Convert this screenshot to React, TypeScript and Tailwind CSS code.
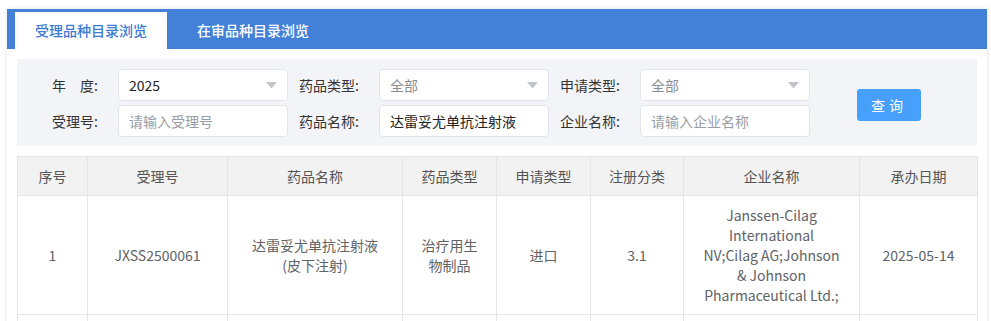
import { ReactNode } from "react";

const FONT = {
  fontFamily: '"Microsoft YaHei", "Noto Sans CJK SC", "Noto Sans", sans-serif',
};

const columns = [
  { title: "序号", width: "w-[70px]" },
  { title: "受理号", width: "w-[140px]" },
  { title: "药品名称", width: "w-[175px]" },
  { title: "药品类型", width: "w-[94px]" },
  { title: "申请类型", width: "w-[94px]" },
  { title: "注册分类", width: "w-[93px]" },
  { title: "企业名称", width: "w-[176px]" },
  { title: "承办日期", width: "w-[118px]" },
];

const Field = ({ label, children }: { label: string; children: ReactNode }) => (
  <div className="flex items-center">
    <label className="w-[91px] shrink-0 pr-[20px] text-right text-[14px] text-[#333]">{label}</label>
    {children}
  </div>
);

const Select = ({ value, muted }: { value: string; muted?: boolean }) => (
  <div className="flex h-[32px] w-[170px] items-center justify-between rounded-[4px] border border-[#e2e4ea] bg-white pl-[10px] pr-[10px]">
    <span className={muted ? "text-[14px] text-[#8a8d93]" : "text-[14px] text-[#222]"}>{value}</span>
    <svg width="11" height="7" viewBox="0 0 11 7">
      <path d="M0 0 L11 0 L5.5 6.5 Z" fill="#c2c4c9" />
    </svg>
  </div>
);

const Input = ({ value, placeholder }: { value?: string; placeholder: string }) => (
  <div className="flex h-[32px] w-[170px] items-center rounded-[4px] border border-[#e2e4ea] bg-white pl-[10px]">
    {value ? (
      <span className="text-[14px] text-[#222]">{value}</span>
    ) : (
      <span className="text-[14px] text-[#9a9da3]">{placeholder}</span>
    )}
  </div>
);

export default function App() {
  return (
    <div className="min-h-screen overflow-hidden bg-white pl-[7px] pt-[9px]" style={FONT}>
      <div className="w-[980px] bg-white shadow-[0_0_5px_rgba(0,0,0,0.12)]">
        {/* tabs */}
        <div className="flex h-[40px] items-end bg-[#4281d7] pl-[8px]">
          <div className="flex h-[37px] w-[152px] items-center justify-center bg-white text-[14px] font-medium text-[#3d7bd3]">
            受理品种目录浏览
          </div>
          <div className="ml-[10px] flex h-[37px] w-[152px] items-center justify-center text-[14px] font-medium text-white">
            在审品种目录浏览
          </div>
        </div>

        <div className="px-[10px] pt-[10px]">
          {/* filters */}
          <div className="flex h-[87px] items-start bg-[#f3f4f8] pl-[10px] pt-[10px]">
            <div className="flex flex-col gap-[4px]">
              <div className="flex">
                <Field label="年　度:">
                  <Select value="2025" />
                </Field>
                <Field label="药品类型:">
                  <Select value="全部" muted />
                </Field>
                <Field label="申请类型:">
                  <Select value="全部" muted />
                </Field>
              </div>
              <div className="flex">
                <Field label="受理号:">
                  <Input placeholder="请输入受理号" />
                </Field>
                <Field label="药品名称:">
                  <Input value="达雷妥尤单抗注射液" placeholder="" />
                </Field>
                <Field label="企业名称:">
                  <Input placeholder="请输入企业名称" />
                </Field>
              </div>
            </div>
            <button
              type="button"
              className="ml-[47px] mt-[20px] h-[32px] w-[64px] rounded-[3px] bg-[#46a0fc] text-[14px] tracking-[4px] text-white"
            >
              查询
            </button>
          </div>

          {/* table */}
          <table className="mt-[10px] w-[960px] table-fixed border-collapse text-[14px] text-[#606266]">
            <thead>
              <tr className="bg-[#f2f2f2]">
                {columns.map((col) => (
                  <th
                    key={col.title}
                    className={`${col.width} h-[39px] border border-[#e6e6e6] px-[10px] text-center font-normal text-[#555]`}
                  >
                    {col.title}
                  </th>
                ))}
              </tr>
            </thead>
            <tbody>
              <tr className="leading-[20px]">
                <td className="h-[119px] border border-[#e6e6e6] px-[10px] py-[10px] text-center">1</td>
                <td className="border border-[#e6e6e6] px-[10px] text-center">JXSS2500061</td>
                <td className="border border-[#e6e6e6] px-[10px] text-center">
                  达雷妥尤单抗注射液
                  <br />
                  (皮下注射)
                </td>
                <td className="border border-[#e6e6e6] px-[10px] text-center">
                  治疗用生
                  <br />
                  物制品
                </td>
                <td className="border border-[#e6e6e6] px-[10px] text-center">进口</td>
                <td className="border border-[#e6e6e6] px-[10px] text-center">3.1</td>
                <td className="border border-[#e6e6e6] px-[10px] text-center">
                  Janssen-Cilag
                  <br />
                  International
                  <br />
                  NV;Cilag AG;Johnson
                  <br />
                  &amp; Johnson
                  <br />
                  Pharmaceutical Ltd.;
                </td>
                <td className="border border-[#e6e6e6] px-[10px] text-center">2025-05-14</td>
              </tr>
              <tr>
                {columns.map((col) => (
                  <td key={col.title} className="h-[60px] border border-[#e6e6e6]" />
                ))}
              </tr>
            </tbody>
          </table>
        </div>
      </div>
    </div>
  );
}
